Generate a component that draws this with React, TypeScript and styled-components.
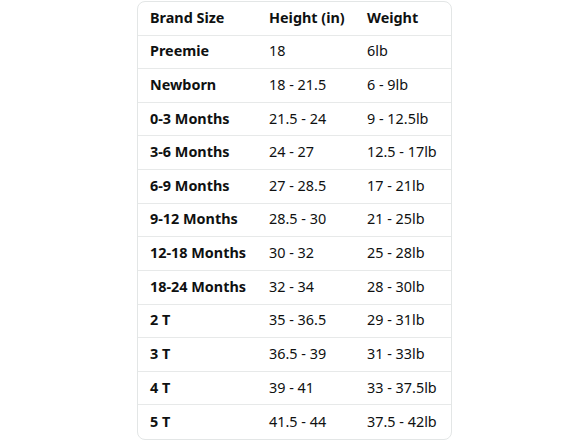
import React from 'react';
import styled, { createGlobalStyle } from 'styled-components';

const GlobalStyle = createGlobalStyle`
    html, body {
        margin: 0;
        padding: 0;
        background: #ffffff;
    }
    body {
        font-family: "Noto Sans", "Open Sans", Arial, sans-serif;
        color: #0f1111;
    }
`;

const Page = styled.div`
    width: 588px;
    height: 441px;
    display: flex;
    justify-content: center;
    padding-top: 1px;
    box-sizing: border-box;
`;

const TableCard = styled.div`
    width: 315px;
    height: 439px;
    margin-left: 1px;
    border: 1px solid #e3e6e6;
    border-radius: 8px;
    box-sizing: border-box;
    overflow: hidden;
    display: grid;
    grid-template-rows: repeat(13, 1fr);
`;

const Row = styled.div<{ $last?: boolean }>`
    display: grid;
    grid-template-columns: 119px 98px 1fr;
    align-items: center;
    padding: 0 0 2px 12px;
    border-bottom: ${props => (props.$last ? 'none' : '1px solid #e7e9e9')};
    font-size: 14.4px;
`;

const Cell = styled.div<{ $bold?: boolean }>`
    font-weight: ${props => (props.$bold ? 700 : 400)};
    white-space: nowrap;
`;

const rows: [string, string, string][] = [
    ['Preemie', '18', '6lb'],
    ['Newborn', '18 - 21.5', '6 - 9lb'],
    ['0-3 Months', '21.5 - 24', '9 - 12.5lb'],
    ['3-6 Months', '24 - 27', '12.5 - 17lb'],
    ['6-9 Months', '27 - 28.5', '17 - 21lb'],
    ['9-12 Months', '28.5 - 30', '21 - 25lb'],
    ['12-18 Months', '30 - 32', '25 - 28lb'],
    ['18-24 Months', '32 - 34', '28 - 30lb'],
    ['2 T', '35 - 36.5', '29 - 31lb'],
    ['3 T', '36.5 - 39', '31 - 33lb'],
    ['4 T', '39 - 41', '33 - 37.5lb'],
    ['5 T', '41.5 - 44', '37.5 - 42lb'],
];

const App = () => (
    <Page>
        <GlobalStyle />
        <TableCard>
            <Row>
                <Cell $bold>Brand Size</Cell>
                <Cell $bold>Height (in)</Cell>
                <Cell $bold>Weight</Cell>
            </Row>
            {rows.map(([size, height, weight], i) => (
                <Row key={size} $last={i === rows.length - 1}>
                    <Cell $bold>{size}</Cell>
                    <Cell>{height}</Cell>
                    <Cell>{weight}</Cell>
                </Row>
            ))}
        </TableCard>
    </Page>
);

export default App;
